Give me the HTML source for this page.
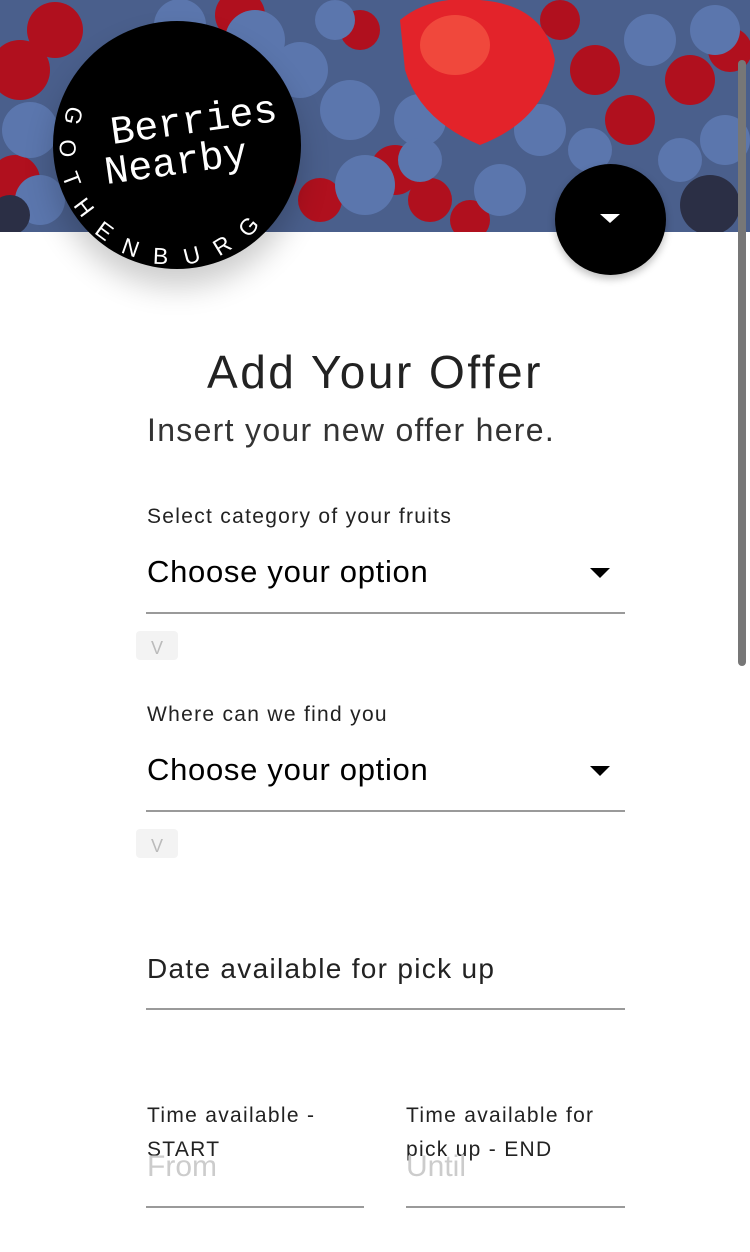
<!DOCTYPE html>
<html><head><meta charset="utf-8"><style>
html,body{margin:0;padding:0;width:750px;height:1252px;overflow:hidden;background:#fff;font-family:"Liberation Sans",sans-serif;}
.abs{position:absolute}
.lbl{position:absolute;left:147px;font-size:21px;color:#222;letter-spacing:1.3px}
.sel{position:absolute;left:147px;font-size:31px;color:#000;letter-spacing:0.7px}
.line{position:absolute;left:146px;width:479px;height:2px;background:#9a9a9a}
.tri{position:absolute;left:590px;width:0;height:0;border-left:10px solid transparent;border-right:10px solid transparent;border-top:10px solid #000}
.chk{position:absolute;left:136px;width:42px;height:29px;background:#f3f3f3;border-radius:4px;color:#bbb;font-size:18px;text-align:center;line-height:34px}
.mono{position:absolute;color:#fff;font-family:'Liberation Mono',monospace;font-size:40px;transform:rotate(-8deg);transform-origin:left bottom;white-space:nowrap}
</style></head><body>
<svg class="abs" style="left:0;top:0" width="750" height="232">
<rect width="750" height="232" fill="#4a5f8c"/>
<g fill="#b0101e">
<circle cx="20" cy="70" r="30"/><circle cx="55" cy="30" r="28"/><circle cx="15" cy="180" r="25"/><circle cx="240" cy="15" r="25"/>
<circle cx="205" cy="95" r="25"/><circle cx="225" cy="190" r="25"/><circle cx="275" cy="175" r="22"/><circle cx="320" cy="200" r="22"/>
<circle cx="395" cy="170" r="25"/><circle cx="430" cy="200" r="22"/><circle cx="470" cy="220" r="20"/><circle cx="595" cy="70" r="25"/>
<circle cx="630" cy="120" r="25"/><circle cx="690" cy="80" r="25"/><circle cx="730" cy="50" r="22"/><circle cx="440" cy="40" r="22"/>
<circle cx="360" cy="30" r="20"/><circle cx="560" cy="20" r="20"/><circle cx="265" cy="110" r="22"/><circle cx="710" cy="210" r="20"/>
</g>
<g fill="#5b76ad">
<circle cx="180" cy="25" r="26"/><circle cx="255" cy="40" r="30"/><circle cx="300" cy="70" r="28"/><circle cx="350" cy="110" r="30"/>
<circle cx="420" cy="120" r="26"/><circle cx="365" cy="185" r="30"/><circle cx="420" cy="160" r="22"/><circle cx="500" cy="190" r="26"/>
<circle cx="540" cy="130" r="26"/><circle cx="590" cy="150" r="22"/><circle cx="650" cy="40" r="26"/><circle cx="715" cy="30" r="25"/>
<circle cx="725" cy="140" r="25"/><circle cx="680" cy="160" r="22"/><circle cx="30" cy="130" r="28"/><circle cx="40" cy="200" r="25"/>
<circle cx="335" cy="20" r="20"/><circle cx="500" cy="100" r="18"/>
</g>
<g fill="#2b2f45"><circle cx="710" cy="205" r="30"/><circle cx="10" cy="215" r="20"/></g>
<path d="M400,20 Q430,-5 480,0 Q545,5 555,60 Q545,120 480,145 Q420,120 405,70 Z" fill="#e3232a"/>
<ellipse cx="455" cy="45" rx="35" ry="30" fill="#f0483c"/>
</svg>
<div class="abs" style="left:738px;top:60px;width:8px;height:606px;background:#777;border-radius:4px"></div>
<div class="abs" style="left:53px;top:21px;width:248px;height:248px;border-radius:50%;background:#000;box-shadow:0 18px 30px rgba(0,0,0,0.2)"></div>
<div class="mono" style="left:114px;top:112px">Berries</div>
<div class="mono" style="left:108px;top:152px">Nearby</div>
<svg class="abs" style="left:53px;top:21px" width="248" height="248">
<defs><path id="c" d="M16.3,84.6 A114,114 0 0,0 218.5,188.7"/></defs>
<text font-family="Liberation Sans" font-size="23" fill="#fff" letter-spacing="17.5"><textPath href="#c" startOffset="0">GOTHENBURG</textPath></text>
</svg>
<div class="abs" style="left:555px;top:164px;width:111px;height:111px;border-radius:50%;background:#000;box-shadow:0 4px 8px rgba(0,0,0,0.25)"></div>
<div class="abs" style="left:600px;top:214px;width:0;height:0;border-left:10px solid transparent;border-right:10px solid transparent;border-top:9px solid #fff"></div>
<div class="abs" style="left:0;top:345px;width:750px;text-align:center;font-size:46px;color:#222;letter-spacing:2.5px">Add Your Offer</div>
<div class="abs" style="left:147px;top:412px;font-size:32px;color:#333;letter-spacing:1.3px">Insert your new offer here.</div>
<div class="lbl" style="top:505px">Select category of your fruits</div>
<div class="sel" style="top:554px">Choose your option</div>
<div class="tri" style="top:568px"></div>
<div class="line" style="top:612px"></div>
<div class="chk" style="top:631px">V</div>
<div class="lbl" style="top:703px">Where can we find you</div>
<div class="sel" style="top:752px">Choose your option</div>
<div class="tri" style="top:766px"></div>
<div class="line" style="top:810px"></div>
<div class="chk" style="top:829px">V</div>
<div class="abs" style="left:147px;top:953px;font-size:28px;color:#222;letter-spacing:1.3px">Date available for pick up</div>
<div class="line" style="top:1008px"></div>
<div class="lbl" style="top:1099px;line-height:34px">Time available -<br>START</div>
<div class="lbl" style="left:406px;top:1099px;line-height:34px">Time available for<br>pick up - END</div>
<div class="abs" style="left:147px;top:1150px;font-size:30px;color:#ccc">From</div>
<div class="abs" style="left:406px;top:1150px;font-size:30px;color:#ccc">Until</div>
<div class="line" style="top:1206px;width:218px"></div>
<div class="line" style="top:1206px;left:406px;width:219px"></div>
</body></html>
